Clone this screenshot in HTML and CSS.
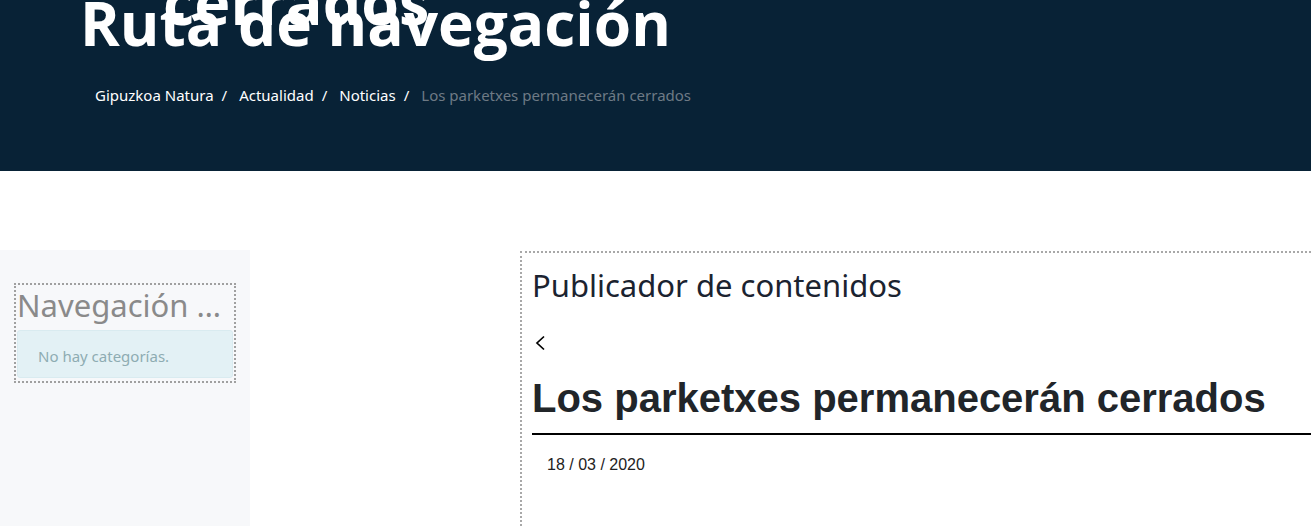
FILE: index.html
```html
<!DOCTYPE html>
<html lang="es">
<head>
<meta charset="utf-8">
<title>Los parketxes permanecerán cerrados</title>
<link rel="stylesheet" href="styles.css">
</head>
<body>
<header class="hero">
  <div class="hero-prev">cerrados</div>
  <h1 class="hero-title">Ruta de navegación</h1>
  <nav class="crumbs">
    <a class="crumb" href="#">Gipuzkoa Natura</a><span class="sep">/</span>
    <a class="crumb" href="#">Actualidad</a><span class="sep">/</span>
    <a class="crumb" href="#">Noticias</a><span class="sep">/</span>
    <span class="crumb current">Los parketxes permanecerán cerrados</span>
  </nav>
</header>
<main class="layout">
  <aside class="sidebar">
    <section class="portlet">
      <h2 class="portlet-title">Navegación por categorías</h2>
      <div class="alert-info">No hay categorías.</div>
    </section>
  </aside>
  <section class="content">
    <h2 class="content-title">Publicador de contenidos</h2>
    <a class="back" href="#" aria-label="Volver">
      <svg width="12" height="16" viewBox="0 0 12 16"><path d="M10 1.5 L3 8 L10 14.5" fill="none" stroke="#000" stroke-width="1.7"/></svg>
    </a>
    <h3 class="article-title">Los parketxes permanecerán cerrados</h3>
    <div class="article-date">18 / 03 / 2020</div>
  </section>
</main>
</body>
</html>
```
FILE: styles.css
```css
html, body {
  margin: 0;
  padding: 0;
  background: #fff;
  overflow: hidden;
}
body {
  width: 1311px;
  height: 526px;
  font-family: "Open Sans", "Noto Sans", sans-serif;
}
.hero {
  background: #082236;
  height: 171px;
  overflow: hidden;
  color: #fff;
  box-sizing: border-box;
}
.hero-prev {
  font-family: "Open Sans", sans-serif;
  font-weight: 700;
  font-size: 61px;
  line-height: 29px;
  height: 0;
  margin-left: 163px;
  transform: translateY(-13px);
}
.hero-title {
  margin: 0 0 0 80px;
  font-family: "Open Sans", sans-serif;
  font-weight: 700;
  font-size: 60.4px;
  line-height: 46px;
}
.crumbs {
  display: flex;
  align-items: baseline;
  margin: 39px 0 0 95px;
  font-family: "Noto Sans", sans-serif;
  font-size: 15px;
}
.crumb {
  color: #fff;
  text-decoration: none;
}
.crumb.current {
  color: #6e7a85;
}
.sep {
  color: #fff;
  margin: 0 12px 0 8px;
}
.layout {
  display: flex;
  margin-top: 79px;
  height: 276px;
}
.sidebar {
  width: 250px;
  flex: 0 0 250px;
  background: #f7f8fa;
  padding: 33px 14px 0 14px;
  box-sizing: border-box;
}
.portlet {
  border: 2px dotted #a0a0a0;
  padding: 1px;
  height: 100px;
  box-sizing: border-box;
}
.portlet-title {
  margin: 0 0 6px 0;
  font-family: "Noto Sans", sans-serif;
  font-weight: 400;
  font-size: 31px;
  line-height: 38px;
  color: #8a8a8a;
  white-space: nowrap;
  overflow: hidden;
  text-overflow: ellipsis;
}
.alert-info {
  background: #e3f1f5;
  border: 1px solid #d9ebf0;
  border-radius: 3px;
  height: 48px;
  box-sizing: border-box;
  padding: 4px 0 0 20px;
  font-family: "Noto Sans", sans-serif;
  font-size: 15px;
  line-height: 42px;
  color: #8eacb2;
}
.content {
  margin-left: 270px;
  flex: 1;
  border-left: 2px dotted #a8a8a8;
  border-top: 2px dotted #a8a8a8;
  padding: 14px 0 0 10px;
  margin-top: 1px;
}
.content-title {
  margin: 0;
  font-family: "Noto Sans", sans-serif;
  font-weight: 400;
  font-size: 31px;
  line-height: 36px;
  color: #1b2330;
}
.back {
  display: block;
  margin: 32px 0 0 2px;
  width: 12px;
  height: 16px;
}
.back svg { display: block; }
.article-title {
  margin: 23px 0 0 0;
  font-family: "Liberation Sans", Arial, sans-serif;
  font-weight: 700;
  font-size: 40px;
  line-height: 48px;
  color: #212529;
  padding-bottom: 11px;
  border-bottom: 2px solid #000;
}
.article-date {
  margin: 21px 0 0 15px;
  font-family: "Liberation Sans", Arial, sans-serif;
  font-size: 16px;
  color: #222;
}
```
